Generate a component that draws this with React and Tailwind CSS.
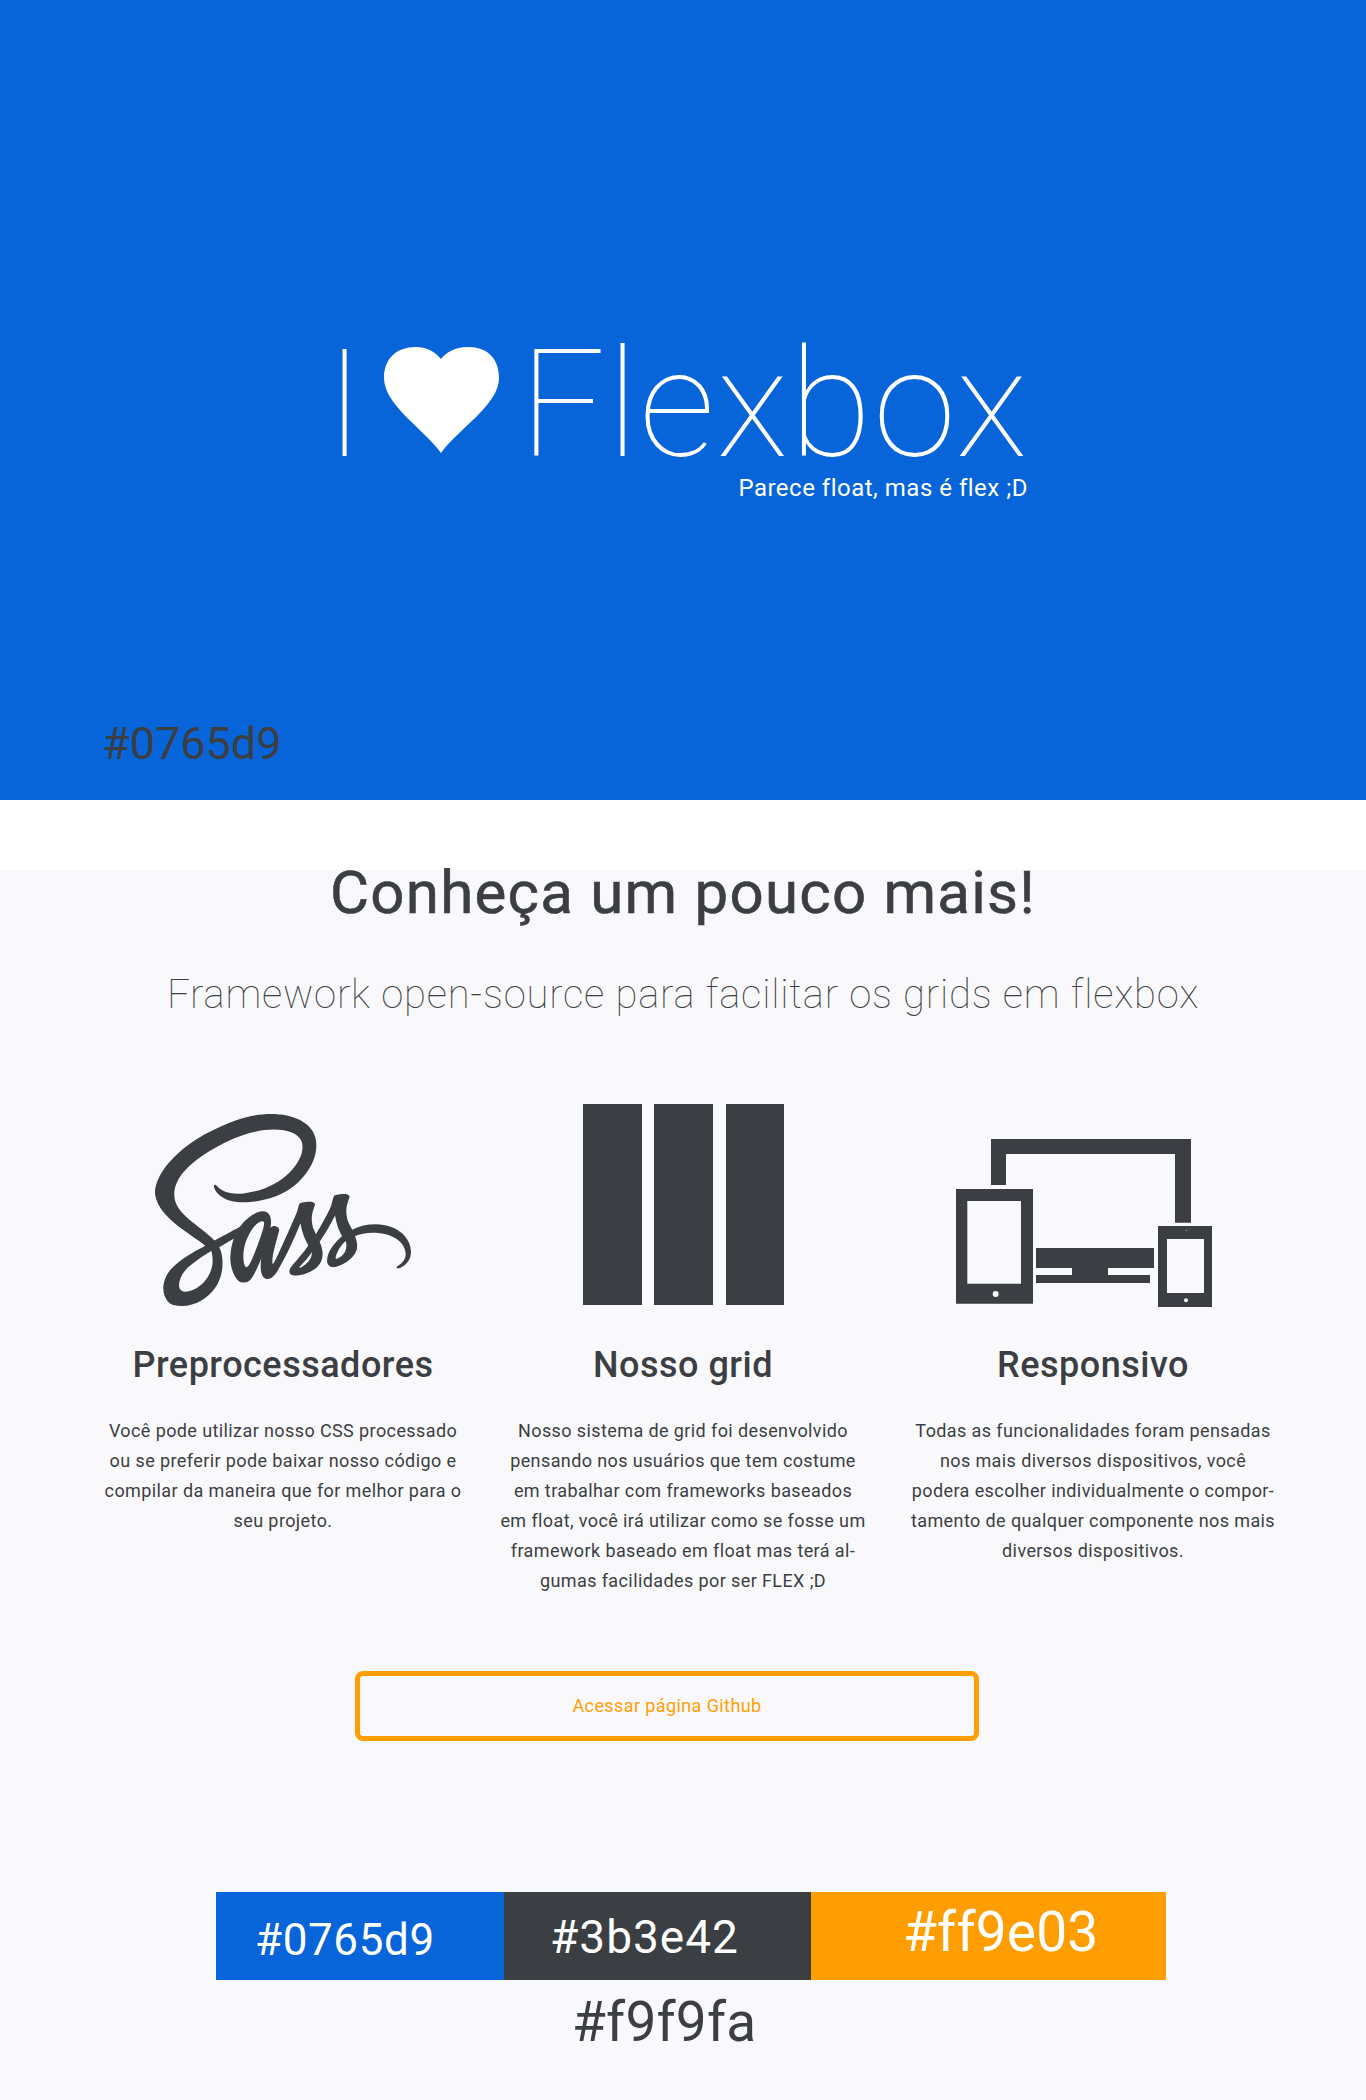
import React from 'react';
import { FaSass } from 'react-icons/fa';

const DARK = '#3b3e42';

function GridIcon() {
    return (
        <svg width="201" height="201" viewBox="0 0 201 201" fill={DARK}>
            <rect x="0" y="0" width="59" height="201" />
            <rect x="71" y="0" width="59" height="201" />
            <rect x="143" y="0" width="58" height="201" />
        </svg>
    );
}

function DevicesIcon() {
    return (
        <svg className="mr-[26px] mt-[6px]" width="300" height="220" viewBox="0 0 900 660" fill={DARK}>
            <path d="M183 87H783V338H735V132H228V225H183Z" />
            <path fillRule="evenodd" d="M78 237H309V581H78ZM112 273V521H273V273Z" />
            <circle cx="197" cy="552" r="9" fill="#f9f9fb" />
            <path d="M318 414H672V474H534V495H660V519H318V495H426V474H318Z" />
            <path fillRule="evenodd" d="M684 348H846V591H684ZM711 387V549H822V387Z" />
            <circle cx="768" cy="571" r="6" fill="#f9f9fb" />
            <circle cx="769" cy="361" r="1.5" fill="#f9f9fb" />
        </svg>
    );
}

function Feature({ icon, title, lines, className }) {
    return (
        <div className={`flex flex-col items-center text-center ${className}`}>
            <div className="flex h-[226px] items-start justify-center">{icon}</div>
            <h3 className="mt-[11px] text-[36px] font-medium leading-[48px] tracking-[0.5px] text-[#3b3e42]">{title}</h3>
            <p className="mt-[27px] text-[18px] leading-[30px] tracking-[0.4px] text-[#3b3e42]">
                {lines.map((line) => (
                    <span key={line} className="block whitespace-nowrap">{line}</span>
                ))}
            </p>
        </div>
    );
}

export default function App() {
    return (
        <div className="w-full font-['Roboto',sans-serif]">
            {/* Hero */}
            <header className="flex h-[800px] flex-col bg-[#0765d9] text-white">
                <div className="ml-[325px] mt-[334px] w-[703px]">
                    <h1 className="flex items-center whitespace-nowrap text-[150px] font-thin leading-[142px] tracking-[1.5px]">
                        <span>I</span>
                        <svg className="ml-[18px] mr-[21px] -mt-[10px] shrink-0" width="115" height="106" viewBox="0 0 115 106" fill="#fff">
                            <path d="M57 106C40 82 0 58 0 31C0 12 12 0 32 0C44 0 52 6 57 12C62 6 70 0 84 0C104 0 115 12 115 31C115 58 74 82 57 106Z" />
                        </svg>
                        <span>Flexbox</span>
                    </h1>
                    <p className="text-right text-[24px] leading-[24px] tracking-[0.5px]">Parece float, mas é flex ;D</p>
                </div>
                <p className="ml-[102px] mt-[218px] text-[45px] leading-[52px] text-[#3b3e42]">#0765d9</p>
            </header>

            <div className="h-[69px] bg-white" />

            {/* About */}
            <main className="h-[1231px] bg-[#f9f9fb]">
                <h2 className="text-center text-[60px] font-normal leading-[48px] tracking-[1.25px] text-[#3b3e42] [-webkit-text-stroke:0.6px_#3b3e42]">Conheça um pouco mais!</h2>
                <p className="mt-[53px] text-center text-[40px] font-thin leading-[50px] tracking-[0.8px] text-[#3b3e42]">Framework open-source para facilitar os grids em flexbox</p>

                <section className="mt-[84px] flex pl-[97px]">
                    <Feature
                        className="w-[372px]"
                        icon={<FaSass className="-mt-[22px]" size={256} color={DARK} />}
                        title="Preprocessadores"
                        lines={[
                            'Você pode utilizar nosso CSS processado',
                            'ou se preferir pode baixar nosso código e',
                            'compilar da maneira que for melhor para o',
                            'seu projeto.',
                        ]}
                    />
                    <Feature
                        className="ml-[28px] w-[372px]"
                        icon={<GridIcon />}
                        title="Nosso grid"
                        lines={[
                            'Nosso sistema de grid foi desenvolvido',
                            'pensando nos usuários que tem costume',
                            'em trabalhar com frameworks baseados',
                            'em float, você irá utilizar como se fosse um',
                            'framework baseado em float mas terá al-',
                            'gumas facilidades por ser FLEX ;D',
                        ]}
                    />
                    <Feature
                        className="ml-[38px] w-[372px]"
                        icon={<DevicesIcon />}
                        title="Responsivo"
                        lines={[
                            'Todas as funcionalidades foram pensadas',
                            'nos mais diversos dispositivos, você',
                            'podera escolher individualmente o compor-',
                            'tamento de qualquer componente nos mais',
                            'diversos dispositivos.',
                        ]}
                    />
                </section>

                <div className="ml-[355px] mt-[75px] flex h-[70px] w-[624px] items-center justify-center rounded-lg border-[5px] border-[#ff9e03]">
                    <a className="pb-[2px] text-[18px] tracking-[0.4px] text-[#ff9e03]">Acessar página Github</a>
                </div>

                {/* Palette */}
                <div className="ml-[216px] mt-[151px] flex h-[88px] w-[950px] text-white">
                    <div className="w-[288px] bg-[#0765d9] pl-[39px] pt-[18px] text-[44px] leading-[60px] tracking-[0.6px]">#0765d9</div>
                    <div className="w-[307px] bg-[#3b3e42] pl-[46px] pt-[15px] text-[46px] leading-[60px] tracking-[1px]">#3b3e42</div>
                    <div className="w-[355px] bg-[#ff9e03] pl-[92px] pt-[10px] text-[55px] leading-[60px] tracking-[0.2px]">#ff9e03</div>
                </div>
                <p className="mt-[12px] pl-[572px] text-[55px] leading-[60px] tracking-[0.2px] text-[#3b3e42]">#f9f9fa</p>
            </main>
        </div>
    );
}
